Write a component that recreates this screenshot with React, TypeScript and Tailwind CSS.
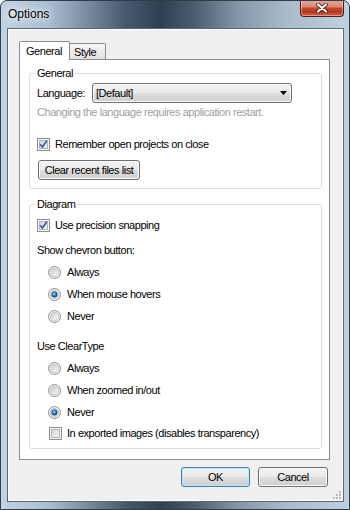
import React from "react";

function Checkbox({ checked }: { checked?: boolean }) {
  return (
    <svg width="13" height="13" viewBox="0 0 13 13" className="block shrink-0">
      <defs>
        <linearGradient id="cbg" x1="0" y1="0" x2="1" y2="1">
          <stop offset="0" stopColor="#cdd1d6" />
          <stop offset="1" stopColor="#f7f7f7" />
        </linearGradient>
      </defs>
      <rect x="0.5" y="0.5" width="12" height="12" fill="#f6f6f6" stroke="#8e8f8f" />
      <rect x="2.5" y="2.5" width="8" height="8" fill="url(#cbg)" stroke="#b2b6bc" />
      {checked && (
        <path d="M3.2 6.3 L5.4 9 L9.8 2.8" fill="none" stroke="#4a5f97" strokeWidth="1.7" />
      )}
    </svg>
  );
}

function Radio({ checked }: { checked?: boolean }) {
  return (
    <svg width="13" height="13" viewBox="0 0 13 13" className="block shrink-0">
      <defs>
        <linearGradient id="rbg" x1="0" y1="0" x2="1" y2="1">
          <stop offset="0" stopColor="#c6c9cd" />
          <stop offset="1" stopColor="#fbfbfb" />
        </linearGradient>
        <radialGradient id="rdot" cx="0.4" cy="0.35" r="0.75">
          <stop offset="0" stopColor="#a8dcf8" />
          <stop offset="0.45" stopColor="#2d8fd0" />
          <stop offset="1" stopColor="#0b3a68" />
        </radialGradient>
      </defs>
      <circle cx="6.5" cy="6.5" r="6" fill="#f4f4f4" stroke="#8e8f8f" />
      <circle cx="6.5" cy="6.5" r="4.2" fill="url(#rbg)" stroke="#bcc0c5" strokeWidth="0.8" />
      {checked && <circle cx="6.5" cy="6.5" r="2.7" fill="url(#rdot)" stroke="#123f6b" strokeWidth="0.7" />}
    </svg>
  );
}

const btn =
  "flex h-[20px] items-center justify-center rounded-[3px] border bg-[linear-gradient(#f2f2f2_0%,#ebebeb_48%,#dddddd_52%,#cfcfcf_100%)] leading-[12px] text-black";

export default function App() {
  return (
    <div className="h-[510px] w-[350px] font-['Liberation_Sans',Arial,sans-serif] text-[11px] tracking-[-0.45px] text-black">
      <div className="relative flex h-full w-full flex-col overflow-hidden rounded-t-[7px] border border-[#2f3c4a] bg-[linear-gradient(90deg,#c3d3e3_0%,#aabdd0_14%,#7d90a3_24%,#46596c_36%,#2f4052_46%,#4c5e70_56%,#8596a8_68%,#a9bacb_82%,#c0d0e0_100%)]">
        {/* title bar */}
        <div className="flex h-[27px] shrink-0 items-start">
          <span className="ml-[7px] mt-[6px] text-[12px] leading-[14px] tracking-normal text-black [text-shadow:0_0_6px_#ffffff,0_0_10px_#ffffff]">
            Options
          </span>
          <div className="-mt-px ml-auto mr-[5px] flex h-[17px] w-[44px] items-center justify-center rounded-b-[4px] border border-t-0 border-[#4b2019] bg-[linear-gradient(#e9a99b_0%,#d98b79_40%,#c24a30_52%,#b8341c_75%,#d66a4c_100%)] shadow-[inset_0_0_0_1px_rgba(255,255,255,0.35)]">
            <svg width="12" height="10" viewBox="0 0 12 10">
              <path d="M2 1.5 L10 8.5 M10 1.5 L2 8.5" stroke="#4a2018" strokeWidth="3.8" strokeLinecap="round" />
              <path d="M2 1.5 L10 8.5 M10 1.5 L2 8.5" stroke="#ffffff" strokeWidth="2.2" strokeLinecap="round" />
            </svg>
          </div>
        </div>

        {/* client area */}
        <div className="relative ml-[6px] mr-[5px] flex h-[474px] shrink-0 flex-col border border-[#56697d] bg-[#f0f0f0] pl-[11px] pt-[12px] shadow-[inset_0_0_0_1px_#ffffff]">
          {/* tabs */}
          <div className="flex h-[18px] items-end">
            <div className="relative z-10 -mb-px flex h-[19px] w-[51px] items-center rounded-t-[2px] border border-b-0 border-[#898c95] bg-white pb-[1px] pl-[6px] leading-[12px]">
              General
            </div>
            <div className="flex h-[16px] w-[36px] items-center rounded-tr-[2px] border border-b-0 border-l-0 border-[#898c95] bg-[linear-gradient(#f6f6f6,#e2e2e2)] pl-[4px] leading-[12px]">
              Style
            </div>
          </div>

          {/* tab panel */}
          <div className="h-[401px] w-[311px] border border-[#898c95] bg-white">
            <fieldset className="ml-[9px] mt-[7px] w-[293px] rounded-[3px] border border-[#d5dfe5] pb-[8px] pl-[7px]">
              <legend className="-ml-[2px] px-[2px] leading-[12px]">General</legend>
              <div className="mt-[4px] flex h-[20px] items-center">
                <span className="w-[55px] leading-[12px]">Language:</span>
                <div className="flex h-[20px] w-[200px] items-center rounded-[3px] border border-[#707070] bg-[linear-gradient(#f2f2f2_0%,#ebebeb_48%,#dddddd_52%,#cfcfcf_100%)] pl-[3px] pr-[4px] shadow-[inset_0_0_0_1px_#fbfbfb]">
                  <span className="leading-[12px]">[Default]</span>
                  <svg className="ml-auto block" width="7" height="4" viewBox="0 0 7 4">
                    <path d="M0 0H7L3.5 4Z" fill="#000000" />
                  </svg>
                </div>
              </div>
              <div className="mt-[3px] leading-[12px] text-[#a0a0a0]">
                Changing the language requires application restart.
              </div>
              <div className="mt-[20px] flex h-[13px] items-center gap-[5px]">
                <Checkbox checked />
                <span className="leading-[13px]">Remember open projects on close</span>
              </div>
              <button className={`${btn} ml-[1px] mt-[9px] w-[102px] border-[#707070] shadow-[inset_0_0_0_1px_#fbfbfb]`}>
                Clear recent files list
              </button>
            </fieldset>

            <fieldset className="ml-[9px] mt-[9px] w-[293px] rounded-[3px] border border-[#d5dfe5] pb-[8px] pl-[7px]">
              <legend className="-ml-[2px] px-[2px] leading-[12px]">Diagram</legend>
              <div className="mt-[9px] flex h-[13px] items-center gap-[5px]">
                <Checkbox checked />
                <span className="leading-[13px]">Use precision snapping</span>
              </div>
              <div className="mt-[12px] leading-[12px]">Show chevron button:</div>
              <div className="ml-[11px] mt-[10px] flex h-[13px] items-center gap-[6px]">
                <Radio />
                <span className="leading-[13px]">Always</span>
              </div>
              <div className="ml-[11px] mt-[9px] flex h-[13px] items-center gap-[6px]">
                <Radio checked />
                <span className="leading-[13px]">When mouse hovers</span>
              </div>
              <div className="ml-[11px] mt-[9px] flex h-[13px] items-center gap-[6px]">
                <Radio />
                <span className="leading-[13px]">Never</span>
              </div>
              <div className="mt-[17px] leading-[12px]">Use ClearType</div>
              <div className="ml-[11px] mt-[10px] flex h-[13px] items-center gap-[6px]">
                <Radio />
                <span className="leading-[13px]">Always</span>
              </div>
              <div className="ml-[11px] mt-[9px] flex h-[13px] items-center gap-[6px]">
                <Radio />
                <span className="leading-[13px]">When zoomed in/out</span>
              </div>
              <div className="ml-[11px] mt-[9px] flex h-[13px] items-center gap-[6px]">
                <Radio checked />
                <span className="leading-[13px]">Never</span>
              </div>
              <div className="ml-[12px] mt-[8px] flex h-[13px] items-center gap-[5px]">
                <Checkbox />
                <span className="leading-[13px]">In exported images (disables transparency)</span>
              </div>
            </fieldset>
          </div>

          {/* dialog buttons */}
          <div className="mt-[7px] flex justify-end gap-[8px] pr-[15px]">
            <button className={`${btn} w-[69px] border-[#3c7fb1] shadow-[inset_0_0_0_1px_#c5e6f7]`}>OK</button>
            <button className={`${btn} w-[70px] border-[#707070] shadow-[inset_0_0_0_1px_#fbfbfb]`}>Cancel</button>
          </div>

          {/* size grip */}
          <svg className="absolute bottom-[1px] right-[1px] block" width="9" height="9" viewBox="0 0 9 9">
            <g fill="#ffffff">
              <rect x="7" y="1" width="2" height="2" />
              <rect x="4" y="4" width="2" height="2" />
              <rect x="7" y="4" width="2" height="2" />
              <rect x="1" y="7" width="2" height="2" />
              <rect x="4" y="7" width="2" height="2" />
              <rect x="7" y="7" width="2" height="2" />
            </g>
            <g fill="#b8b8b8">
              <rect x="6" y="0" width="2" height="2" />
              <rect x="3" y="3" width="2" height="2" />
              <rect x="6" y="3" width="2" height="2" />
              <rect x="0" y="6" width="2" height="2" />
              <rect x="3" y="6" width="2" height="2" />
              <rect x="6" y="6" width="2" height="2" />
            </g>
          </svg>
        </div>
      </div>
    </div>
  );
}
